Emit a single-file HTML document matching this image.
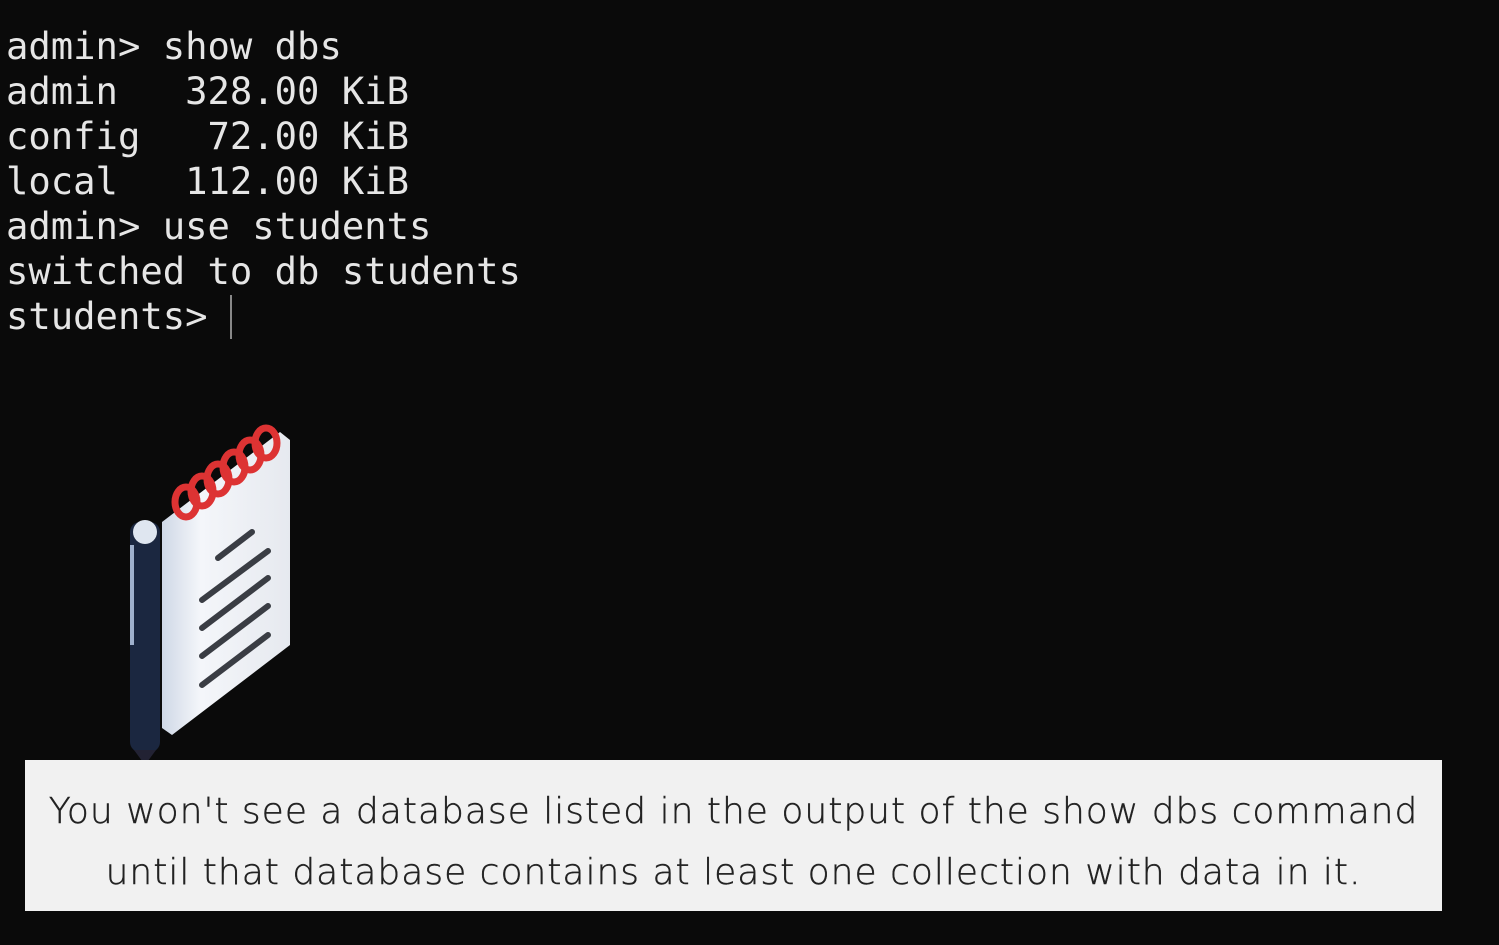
<!DOCTYPE html>
<html><head><style>
html,body{margin:0;padding:0;background:#0a0a0a;width:1499px;height:945px;overflow:hidden;position:relative}
.term{position:absolute;left:6px;top:24px;font-family:"DejaVu Sans Mono","Liberation Mono",monospace;font-size:37.2px;line-height:45px;color:#e6e6e6;white-space:pre}
.cur{display:inline-block;width:2px;height:44px;background:#888;vertical-align:-10px}
.cap{position:absolute;left:25px;top:760px;width:1417px;height:151px;background:#f1f1f1;font-family:"DejaVu Sans","Liberation Sans",sans-serif;font-weight:300;font-size:36px;color:#222;text-align:center;line-height:61px;letter-spacing:1px;box-sizing:border-box;padding-top:21px;-webkit-text-stroke:0.4px #222}
</style></head><body>
<div class="term">admin&gt; show dbs
admin   328.00 KiB
config   72.00 KiB
local   112.00 KiB
admin&gt; use students
switched to db students
students&gt; <span class="cur"></span></div>
<svg style="position:absolute;left:110px;top:410px" width="200" height="360" viewBox="0 0 200 360">
<defs><linearGradient id="pg" x1="0" y1="0" x2="1" y2="0"><stop offset="0" stop-color="#cfd8e6"/><stop offset="0.3" stop-color="#f4f6fa"/><stop offset="1" stop-color="#e6e9ef"/></linearGradient></defs>
<rect x="20" y="112" width="30" height="230" rx="10" fill="#1b2740"/>
<circle cx="35" cy="122" r="12" fill="#dfe6f0"/>
<rect x="20" y="135" width="4" height="100" fill="#9fb0cc"/>
<polygon points="24,340 46,340 35,355" fill="#223"/>
<polygon points="52,112 170,22 180,30 180,235 62,325 52,318" fill="url(#pg)"/>
<g stroke="#d33" stroke-width="7" fill="none">
<ellipse cx="76" cy="92" rx="11" ry="15"/><ellipse cx="92" cy="81" rx="11" ry="15"/><ellipse cx="108" cy="69" rx="11" ry="15"/><ellipse cx="124" cy="57" rx="11" ry="15"/><ellipse cx="140" cy="45" rx="11" ry="15"/><ellipse cx="156" cy="33" rx="11" ry="15"/></g>
<g stroke="#3a3d44" stroke-width="6" stroke-linecap="round">
<line x1="108" y1="148" x2="142" y2="122"/>
<line x1="92" y1="190" x2="158" y2="141"/>
<line x1="92" y1="218" x2="158" y2="168"/>
<line x1="92" y1="246" x2="158" y2="196"/>
<line x1="92" y1="275" x2="158" y2="225"/>
</g>
</svg>
<div class="cap">You won't see a database listed in the output of the show dbs command<br>until that database contains at least one collection with data in it.</div>
</body></html>
